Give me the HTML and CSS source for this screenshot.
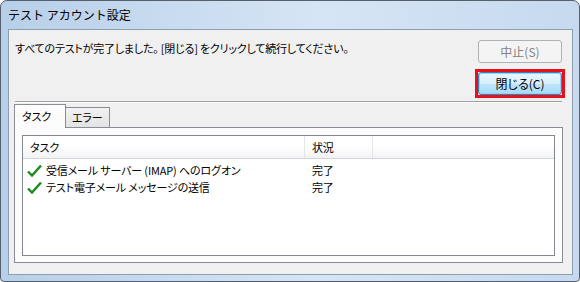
FILE: index.html
```html
<!DOCTYPE html>
<html>

<head>
    <meta charset="UTF-8">
    <title>テスト アカウント設定</title>
    <!-- Styles  -->
    <link rel="stylesheet" href="styles.css">
</head>

<body>
    <div class="window">
        <div class="titlebar">テスト アカウント設定</div>

        <div class="client">
            <!-- Message and buttons -->
            <div class="top-row">
                <div class="message">すべてのテストが完了しました。 [閉じる] をクリックして続行してください。</div>
                <div class="buttons">
                    <button class="btn btn-disabled" disabled>中止(S)</button>
                    <div class="highlight">
                        <button class="btn btn-default">閉じる(C)</button>
                    </div>
                </div>
            </div>

            <div class="separator"></div>

            <!-- Tabs -->
            <div class="tabs">
                <div class="tab-strip">
                    <div class="tab tab-active">タスク</div>
                    <div class="tab">エラー</div>
                </div>
                <div class="tab-panel">
                    <div class="list">
                        <div class="list-header">
                            <div class="col col-task">タスク</div>
                            <div class="col col-status">状況</div>
                            <div class="col col-rest"></div>
                        </div>
                        <div class="list-body">
                            <div class="row">
                                <div class="col col-task">
                                    <svg class="check" width="15" height="13" viewBox="0 0 15 13">
                                        <path d="M1 7.5 L5 11.5 L14 1.5" fill="none" stroke="#1a8a1a" stroke-width="2.4" />
                                    </svg>
                                    受信メール サーバー (IMAP) へのログオン
                                </div>
                                <div class="col col-status">完了</div>
                            </div>
                            <div class="row">
                                <div class="col col-task">
                                    <svg class="check" width="15" height="13" viewBox="0 0 15 13">
                                        <path d="M1 7.5 L5 11.5 L14 1.5" fill="none" stroke="#1a8a1a" stroke-width="2.4" />
                                    </svg>
                                    テスト電子メール メッセージの送信
                                </div>
                                <div class="col col-status">完了</div>
                            </div>
                        </div>
                    </div>
                </div>
            </div>
        </div>
    </div>
</body>

</html>
```
FILE: styles.css
```css
body {
    margin: 0;
    font-family: "Noto Sans CJK JP", "Noto Sans", sans-serif;
    font-size: 11px;
    letter-spacing: -0.15px;
    font-feature-settings: "palt";
    color: #000;
}

.window {
    box-sizing: border-box;
    width: 580px;
    height: 282px;
    border: 1px solid #55606e;
    border-radius: 7px 7px 4px 4px;
    background: linear-gradient(to right, #b8cfe9, #d6e5f5 55%, #c6d9ef);
    padding: 0 6px 6px 7px;
    display: flex;
    flex-direction: column;
}

.titlebar {
    height: 28px;
    line-height: 28px;
    font-size: 12px;
    letter-spacing: 0;
    font-feature-settings: normal;
}

.client {
    flex: 1;
    background: #f0f0f0;
    border: 1px solid #8d9db2;
    padding: 10px 10px 0 6px;
    display: flex;
    flex-direction: column;
}

.top-row {
    display: flex;
}

.message {
    flex: 1;
    line-height: 16px;
    letter-spacing: -0.2px;
}

.buttons {
    display: flex;
    flex-direction: column;
    width: 84px;
}

.btn {
    box-sizing: border-box;
    width: 84px;
    height: 23px;
    border-radius: 3px;
    font-family: inherit;
    font-size: 12px;
    font-feature-settings: "palt";
    padding: 0;
}

.btn-disabled {
    border: 1px solid #adb2b5;
    background: #f4f4f4;
    color: #838383;
}

.highlight {
    margin: 6px -3px 0;
    border: 3px solid #e8101e;
    height: 23px;
}

.btn-default {
    border: 1px solid #3c7fb1;
    background: linear-gradient(#eaf6fd, #d9f0fc 50%, #bee6fd 50%, #a7d9f5);
    box-shadow: inset 0 0 0 1px #8fd6f7;
    color: #000;
}

.separator {
    margin-top: 3px;
    border-top: 1px solid #a0a0a0;
    border-bottom: 1px solid #fff;
}

.tabs {
    margin: 2px -1px 0;
}

.tab-strip {
    display: flex;
    align-items: flex-end;
    height: 23px;
    margin-bottom: -1px;
    position: relative;
    z-index: 1;
}

.tab {
    box-sizing: border-box;
    width: 44px;
    height: 21px;
    line-height: 19px;
    padding: 0 6px;
    border: 1px solid #898c95;
    border-left: none;
    background: linear-gradient(#f2f2f2, #e3e3e3);
}

.tab-active {
    width: 52px;
    height: 24px;
    line-height: 22px;
    padding: 0 7px;
    border-left: 1px solid #898c95;
    border-bottom: none;
    background: #fcfcfc;
}

.tab-panel {
    height: 136px;
    box-sizing: border-box;
    border: 1px solid #898c95;
    background: #fcfcfc;
    padding: 7px 7px 6px;
}

.list {
    height: 100%;
    box-sizing: border-box;
    border: 1px solid #828790;
    background: #fff;
}

.list-header {
    display: flex;
    height: 23px;
    box-sizing: border-box;
    border-bottom: 1px solid #d5d5d5;
    background: linear-gradient(#ffffff, #ffffff 45%, #f1f2f4);
    line-height: 22px;
}

.list-header .col {
    border-right: 1px solid #e3e5e8;
}

.list-header .col-rest {
    flex: 1;
    border-right: none;
}

.col-task {
    box-sizing: border-box;
    width: 282px;
    padding-left: 7px;
    display: flex;
    align-items: center;
}

.col-status {
    box-sizing: border-box;
    width: 68px;
    padding-left: 7px;
}

.list-body {
    padding-top: 3px;
}

.row {
    display: flex;
    height: 17px;
    line-height: 17px;
}

.row .col-task {
    padding-left: 4px;
}

.check {
    margin-right: 4px;
}
```
